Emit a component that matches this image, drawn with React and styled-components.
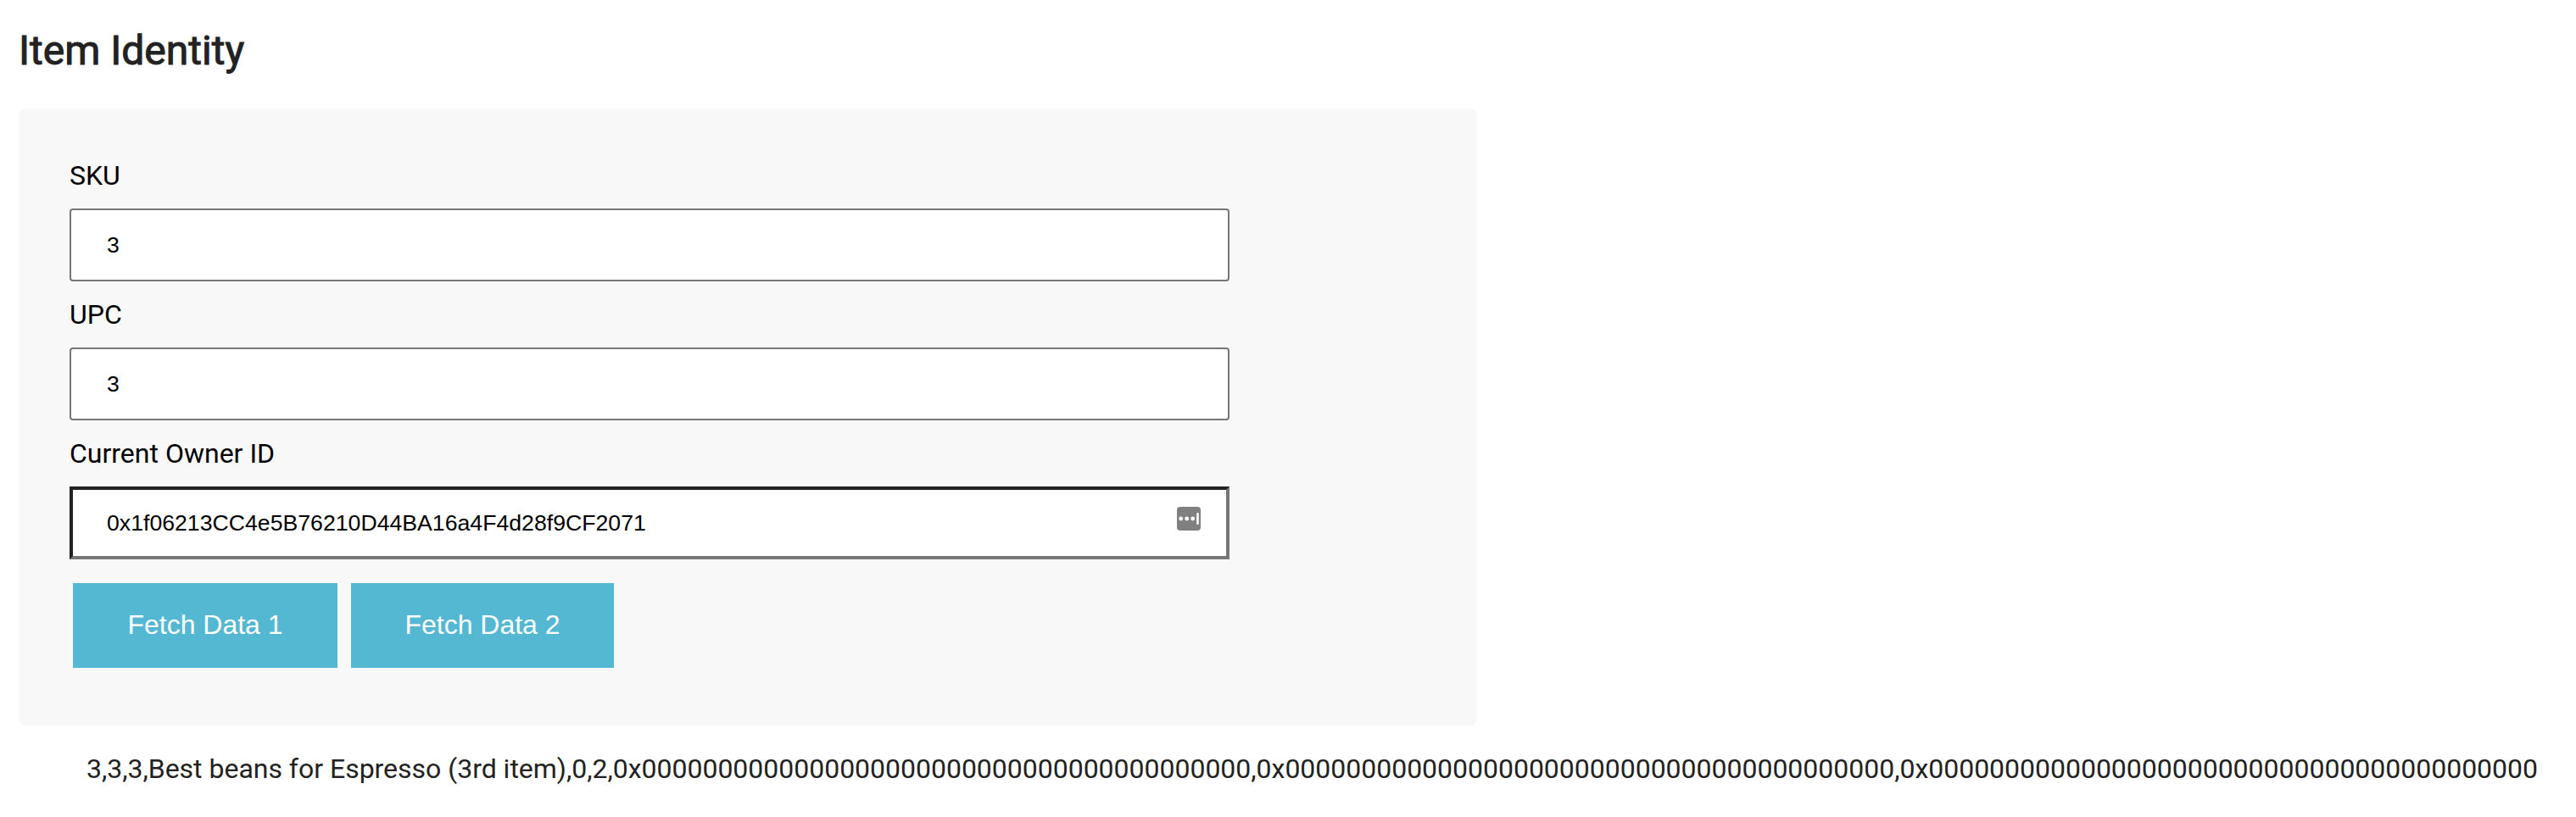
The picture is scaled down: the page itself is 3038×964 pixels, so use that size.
import React from "react";
import styled, { createGlobalStyle, css } from "styled-components";

const GlobalStyle = createGlobalStyle`
  *, *::before, *::after { box-sizing: border-box; }
  body {
    margin: 0;
    background: #fff;
    color: #222;
    font-family: Roboto, sans-serif;
    font-size: 32px;
    line-height: 38px;
  }
`;

const Page = styled.main`
  padding: 30px 0 0 22px;
  min-height: 964px;
  overflow: hidden;
`;

const Heading = styled.h2`
  margin: 0 0 38px;
  font-size: 48px;
  font-weight: 400;
  line-height: 60px;
  -webkit-text-stroke: 1px currentColor;
`;

const Panel = styled.form`
  width: 1720px;
  height: 728px;
  padding: 60px;
  border-radius: 8px;
  background: #f8f8f8;
`;

const Field = styled.div`
  margin-bottom: 20px;
`;

const Label = styled.label`
  display: block;
  margin-bottom: 20px;
  color: #000;
`;

const InputWrap = styled.div`
  position: relative;
  width: 1368px;
`;

const Input = styled.input`
  display: block;
  width: 100%;
  height: 86px;
  padding: 0 42px;
  border: 2px solid #767676;
  border-radius: 4px;
  outline: none;
  background: #fff;
  color: #000;
  font: 26.6667px "Liberation Sans", Arial, sans-serif;

  ${({ $inset }) =>
    $inset &&
    css`
      padding: 0 40px;
      border-width: 4px;
      border-color: #222 #767676 #767676 #222;
      border-radius: 0;
    `}
`;

const AutofillIcon = styled.svg`
  position: absolute;
  top: 24px;
  right: 34px;
  width: 28px;
  height: 28px;
`;

const Actions = styled.div`
  display: flex;
  gap: 16px;
  padding: 8px 4px;
`;

const Button = styled.button`
  width: ${({ $width }) => $width}px;
  height: 100px;
  padding: 0 0 2px;
  border: 0;
  background: #55b8d2;
  color: #fff;
  font: 32px "Liberation Sans", Arial, sans-serif;
`;

const Result = styled.p`
  margin: 32px 0 0;
  padding-left: 80px;
  letter-spacing: -0.016px;
  white-space: nowrap;
`;

const zeroAddress = "0x" + "0".repeat(40);

const fields = [
  { id: "sku", label: "SKU", value: "3" },
  { id: "upc", label: "UPC", value: "3" },
  {
    id: "owner",
    label: "Current Owner ID",
    value: "0x1f06213CC4e5B76210D44BA16a4F4d28f9CF2071",
    autofill: true,
  },
];

const item = [3, 3, 3, "Best beans for Espresso (3rd item)", 0, 2, zeroAddress, zeroAddress, zeroAddress];

export default function App() {
  return (
    <Page>
      <GlobalStyle />
      <Heading>Item Identity</Heading>
      <Panel onSubmit={(e) => e.preventDefault()}>
        {fields.map(({ id, label, value, autofill }) => (
          <Field key={id}>
            <Label htmlFor={id}>{label}</Label>
            <InputWrap>
              <Input id={id} type="text" defaultValue={value} $inset={autofill} spellCheck={false} />
              {autofill && (
                <AutofillIcon viewBox="0 0 28 28" aria-hidden="true">
                  <rect width="28" height="28" rx="4" fill="#808080" />
                  <circle cx="4.7" cy="14" r="2.4" fill="#fff" />
                  <circle cx="11.7" cy="14" r="2.4" fill="#fff" />
                  <circle cx="18.7" cy="14" r="2.4" fill="#fff" />
                  <rect x="23.2" y="7" width="2.6" height="14" rx="1.2" fill="#fff" />
                </AutofillIcon>
              )}
            </InputWrap>
          </Field>
        ))}
        <Actions>
          <Button type="button" $width={312}>Fetch Data 1</Button>
          <Button type="button" $width={310}>Fetch Data 2</Button>
        </Actions>
      </Panel>
      <Result>{item.join(",")}</Result>
    </Page>
  );
}
